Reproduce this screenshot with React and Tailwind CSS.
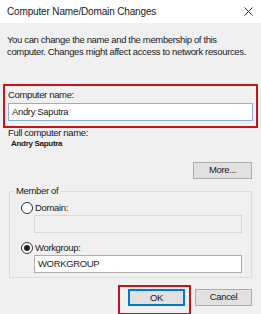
function Radio({ checked }) {
  return (
    <span className="flex h-[12px] w-[12px] shrink-0 items-center justify-center rounded-full border border-[#333] bg-white">
      {checked && <span className="h-[6px] w-[6px] rounded-full bg-[#222]" />}
    </span>
  );
}

export default function App() {
  return (
    <div className="h-[314px] w-[261px] overflow-hidden bg-[#f0f0f0] font-['Liberation_Sans',Arial,sans-serif] text-[9.5px] tracking-[-0.35px] text-[#1a1a1a]">
      <div className="flex h-[23px] items-center justify-between bg-white pl-[7px] pr-[8px]">
        <span className="text-[10px] tracking-[-0.15px]">Computer Name/Domain Changes</span>
        <svg width="9" height="9" viewBox="0 0 9 9" className="text-[#222]">
          <path d="M0.5 0.5L8.5 8.5M8.5 0.5L0.5 8.5" stroke="currentColor" strokeWidth="1" />
        </svg>
      </div>

      <p className="px-[7px] pt-[11px] leading-[12px]">
        You can change the name and the membership of this computer. Changes might affect access to network resources.
      </p>

      <div className="ml-[3px] mt-[26px] h-[44px] w-[255px] border-2 border-[#c4141c] px-[3px] pt-[3px]">
        <div className="leading-[12px]">Computer name:</div>
        <div className="mt-[2px] flex h-[18px] w-[245px] items-center border border-[#8fb0d6] bg-white pl-[3px]">
          Andry Saputra
        </div>
      </div>

      <div className="ml-[8px] mt-[-1px] leading-[12px]">Full computer name:</div>
      <div className="ml-[11px] mt-[-1px] text-[8px] font-bold leading-[12px] tracking-[-0.3px]">Andry Saputra</div>

      <div className="mt-[12px] flex justify-end pr-[9px]">
        <button className="h-[17px] w-[59px] border border-[#adadad] bg-[#e1e1e1]">More...</button>
      </div>

      <fieldset className="ml-[9px] mt-[6px] h-[93px] w-[243px] border border-[#dcdcdc] pl-[11px]">
        <legend className="ml-[-7px] px-[2px] leading-[12px]">Member of</legend>
        <label className="mt-[5px] flex items-center gap-[2px] leading-[12px]">
          <Radio />
          <span>Domain:</span>
        </label>
        <div className="ml-[13px] mt-[1px] h-[18px] w-[208px] border border-[#d9d9d9] bg-[#f0f0f0]" />
        <label className="mt-[9px] flex items-center gap-[2px] leading-[12px]">
          <Radio checked />
          <span>Workgroup:</span>
        </label>
        <div className="ml-[13px] mt-[1px] flex h-[18px] w-[208px] items-center border border-[#adadad] bg-white pl-[3px]">
          WORKGROUP
        </div>
      </fieldset>

      <div className="mt-[7px] flex items-start justify-end pr-[9px]">
        <div className="h-[30px] border-2 border-[#c4141c] pl-[8px] pr-[4px] pt-[2px]">
          <button className="h-[17px] w-[57px] border-2 border-[#0078d7] bg-[#e1e1e1]">OK</button>
        </div>
        <button className="ml-[4px] mt-[4px] h-[17px] w-[57px] border border-[#adadad] bg-[#e1e1e1]">Cancel</button>
      </div>
    </div>
  );
}
